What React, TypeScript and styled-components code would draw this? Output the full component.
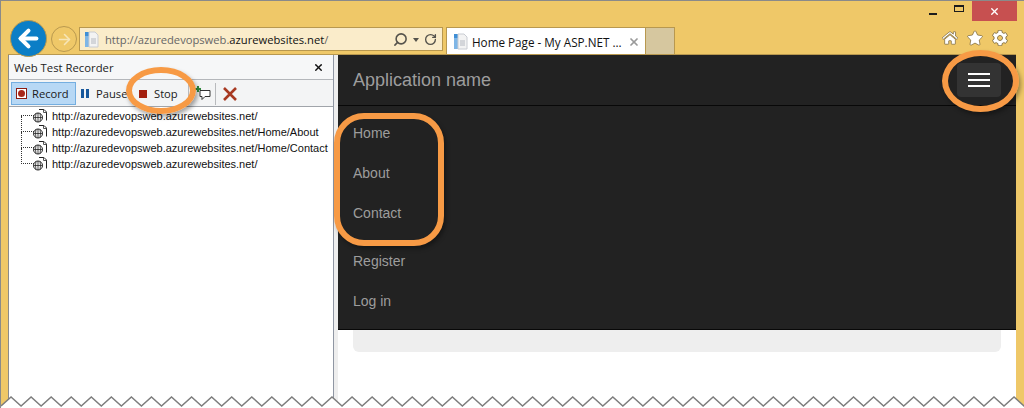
import React from 'react';
import styled, { createGlobalStyle } from 'styled-components';
import { ArrowLeft, ArrowRight, RotateCw, Search, X } from 'lucide-react';
import { FaCog, FaHome, FaStar } from 'react-icons/fa';

const GlobalStyle = createGlobalStyle`
  html, body {
    margin: 0;
    padding: 0;
    background: #fff;
    overflow: hidden;
  }
`;

const Screen = styled.div`
  position: relative;
  width: 1024px;
  height: 408px;
  overflow: hidden;
  display: flex;
  flex-direction: column;
  box-sizing: border-box;
  background: #efc868;
  border-top: 1px solid #8a8a8a;
  border-left: 1px solid #8a8a8a;
  font-family: 'Liberation Sans', Arial, sans-serif;
`;

const WindowBar = styled.div`
  display: flex;
  justify-content: flex-end;
  height: 20px;
  padding-right: 7px;
`;

const WindowButton = styled.div<{ $close?: boolean }>`
  width: ${(p) => (p.$close ? '45px' : '26px')};
  height: 20px;
  display: flex;
  align-items: center;
  justify-content: center;
  background: ${(p) => (p.$close ? '#c75050' : 'transparent')};
`;

const MinimizeGlyph = styled.span`
  width: 8px;
  height: 2px;
  margin-top: 5px;
  background: #1c1c1c;
`;

const MaximizeGlyph = styled.span`
  width: 8px;
  height: 4px;
  margin-top: -6px;
  border: 1px solid #1c1c1c;
  border-top-width: 2px;
`;

const NavRow = styled.div`
  display: flex;
  height: 33px;
  padding-left: 9px;
`;

const BackButton = styled.div`
  width: 37px;
  height: 37px;
  margin-top: -1px;
  border-radius: 50%;
  background: #0b7ec6;
  border: 1px solid #b9994f;
  box-sizing: border-box;
  display: flex;
  align-items: center;
  justify-content: center;
  color: #fff;
  flex: none;
  position: relative;
  z-index: 1;
`;

const ForwardButton = styled.div`
  width: 26px;
  height: 26px;
  margin: 5px 2px 0 4px;
  box-sizing: border-box;
  border-radius: 50%;
  border: 1px solid #b9994f;
  display: flex;
  align-items: center;
  justify-content: center;
  color: #f7e6b8;
  flex: none;
`;

const AddressBar = styled.div`
  width: 364px;
  height: 24px;
  margin-top: 6px;
  margin-right: 3px;
  padding: 0 5px 0 4px;
  box-sizing: border-box;
  display: flex;
  align-items: center;
  background: #faecca;
  border: 1px solid #b8984f;
  flex: none;
`;

const Url = styled.span`
  margin-left: 5px;
  font-family: 'Open Sans', sans-serif;
  font-size: 11.2px;
  color: #666;
  flex: 1;
`;

const Domain = styled.span`
  color: #111;
`;

const AddressTools = styled.div`
  display: flex;
  align-items: center;
  gap: 5px;
  color: #55534c;
`;

const MirroredSearch = styled(Search)`
  transform: scaleX(-1);
`;

const Caret = styled.span`
  width: 0;
  height: 0;
  border: 3.5px solid transparent;
  border-top: 4px solid #55534c;
  margin-top: 4px;
`;

const Tab = styled.div`
  width: 200px;
  height: 28px;
  margin-top: 6px;
  padding: 0 5px 0 6px;
  box-sizing: border-box;
  display: flex;
  align-items: center;
  background: #fff;
  border: 1px solid #b8984f;
  border-bottom: none;
  flex: none;
`;

const TabTitle = styled.span`
  flex: 1;
  margin-left: 3px;
  font-family: 'Open Sans', sans-serif;
  font-size: 11.7px;
  color: #111;
  white-space: nowrap;
`;

const TabFiller = styled.div`
  width: 29px;
  height: 27px;
  margin-top: 6px;
  background: #d6c79f;
  border: 1px solid #b8984f;
  border-left: none;
  border-bottom: none;
  box-sizing: border-box;
`;

const BrowserTools = styled.div`
  margin-left: auto;
  display: flex;
  align-items: center;
  gap: 9px;
  height: 34px;
  padding-right: 16px;
  color: #fff;
`;

const Main = styled.div`
  flex: 1;
  min-height: 0;
  display: flex;
  margin: 0 8px 0 7px;
  background: #fff;
  border-top: 1px solid #b8984f;
`;

const Recorder = styled.div`
  width: 324px;
  display: flex;
  flex-direction: column;
  background: #fff;
  border-left: 1px solid #8a8a8a;
  border-right: 1px solid #8f96a3;
  flex: none;
`;

const RecorderTitle = styled.div`
  height: 24px;
  padding: 0 9px 0 5px;
  display: flex;
  align-items: center;
  justify-content: space-between;
  background: #f6f7f8;
  font-family: 'Open Sans', sans-serif;
  font-size: 11.3px;
  color: #222;
  border-bottom: 1px solid #b4b7bb;
`;

const Toolbar = styled.div`
  height: 25px;
  padding: 1px 2px 0;
  display: flex;
  align-items: center;
  background: #f3f4f5;
`;

const ToolButton = styled.div<{ $active?: boolean; $width: number }>`
  width: ${(p) => p.$width}px;
  height: 23px;
  box-sizing: border-box;
  padding-left: 4px;
  display: flex;
  align-items: center;
  gap: ${(p) => (p.$active ? '5px' : '7px')};
  background: ${(p) => (p.$active ? '#b7d8f5' : 'transparent')};
  border: 1px solid ${(p) => (p.$active ? '#74aee0' : 'transparent')};
  font-family: 'Open Sans', sans-serif;
  font-size: 11.2px;
  color: #1a1a1a;
  flex: none;
  overflow: hidden;
  white-space: nowrap;
`;

const ToolDivider = styled.span<{ $left: number; $right: number }>`
  width: 1px;
  height: 22px;
  margin: 0 ${(p) => p.$right}px 0 ${(p) => p.$left}px;
  background: #b8babd;
  flex: none;
`;

const RecordGlyph = styled.span`
  width: 11px;
  height: 11px;
  box-sizing: border-box;
  border: 1px solid #8c1c12;
  background: #fff;
  display: flex;
  align-items: center;
  justify-content: center;
  &::after {
    content: '';
    width: 7px;
    height: 7px;
    border-radius: 50%;
    background: #a8261a;
  }
`;

const PauseGlyph = styled.span`
  width: 8px;
  height: 9px;
  border-left: 3px solid #17589c;
  border-right: 3px solid #17589c;
  box-sizing: border-box;
  flex: none;
`;

const StopGlyph = styled.span`
  width: 8px;
  height: 8px;
  background: #a3200f;
  flex: none;
`;

const TreePane = styled.div`
  flex: 1;
  padding-top: 1px;
  border-top: 1px solid #a0a4aa;
`;

const TreeRow = styled.div<{ $first?: boolean }>`
  position: relative;
  height: 16px;
  padding-left: 12px;
  display: flex;
  align-items: center;
  gap: 4px;
  margin-left: 12px;
  font-size: 11px;
  color: #111;
  white-space: nowrap;
  &::before {
    content: '';
    position: absolute;
    left: 0;
    top: ${(p) => (p.$first ? '7px' : '-8px')};
    width: 12px;
    height: ${(p) => (p.$first ? '0' : '15px')};
    border-left: 1px dotted #333;
    border-bottom: 1px dotted #333;
  }
`;

const IconSvg = styled.svg`
  display: block;
  flex: none;
`;

const Splitter = styled.div`
  width: 4px;
  background: #eeeeee;
  flex: none;
`;

const Page = styled.div`
  flex: 1;
  min-width: 0;
  display: flex;
  flex-direction: column;
  background: #fff;
`;

const NavHeader = styled.div`
  height: 50px;
  padding: 0 15px;
  display: flex;
  align-items: center;
  justify-content: space-between;
  background: #222;
  border-bottom: 1px solid #080808;
  font-size: 18px;
  color: #9d9d9d;
`;

const Toggle = styled.div`
  width: 44px;
  height: 34px;
  box-sizing: border-box;
  padding: 10px 11px;
  display: flex;
  flex-direction: column;
  justify-content: space-between;
  background: #333;
  border-radius: 4px;
`;

const ToggleBar = styled.span`
  height: 2px;
  background: #fff;
`;

const NavMenu = styled.div`
  padding: 7px 0 8px;
  background: #222;
  border-bottom: 1px solid #080808;
`;

const NavGroup = styled.div<{ $spaced?: boolean }>`
  margin-top: ${(p) => (p.$spaced ? '8px' : '0')};
`;

const NavItem = styled.div`
  height: 40px;
  padding-left: 15px;
  display: flex;
  align-items: center;
  font-size: 14px;
  color: #9d9d9d;
`;

const Well = styled.div`
  height: 22px;
  margin: 0 15px;
  background: #eee;
  border-radius: 0 0 6px 6px;
`;

const Callout = styled.div<{ $x: number; $y: number; $w: number; $h: number; $r: string }>`
  position: absolute;
  left: ${(p) => p.$x}px;
  top: ${(p) => p.$y}px;
  width: ${(p) => p.$w}px;
  height: ${(p) => p.$h}px;
  box-sizing: border-box;
  border: 6px solid #f79a45;
  border-radius: ${(p) => p.$r};
  box-shadow: 2px 3px 4px rgba(0, 0, 0, 0.35);
`;

const TornEdge = styled.svg`
  position: absolute;
  left: 0;
  bottom: 0;
  display: block;
`;

const PageIcon = () => (
  <IconSvg width="16" height="17" viewBox="0 0 16 17">
    <path d="M1 1h5v4H1z" fill="#3f8fd6" />
    <path d="M1 5h5v11H1z" fill="#7fb6e6" />
    <path d="M5 1h6l3 3v12H5z" fill="#f3f3f3" stroke="#c9ccd2" />
    <path d="M7 8h5M7 10h5M7 12h5" stroke="#b4b8c0" />
  </IconSvg>
);

const GlobePageIcon = () => (
  <IconSvg width="15" height="14" viewBox="0 0 15 14">
    <path d="M6 0.500h5l2.500 2.500v8.500" fill="#fff" stroke="#222" />
    <path d="M10.500 0.500v3h3" fill="none" stroke="#555" />
    <circle cx="5" cy="8.500" r="4.500" fill="#fff" stroke="#222" />
    <path d="M0.500 8.500h9M5 4v9M3 4.500q-1 4 0 8M7 4.500q1 4 0 8" fill="none" stroke="#222" strokeWidth="0.8" />
  </IconSvg>
);

const CommentIcon = () => (
  <IconSvg width="16" height="16" viewBox="0 0 16 16">
    <path d="M5 4.500h10v6H10l-3 3v-3H5z" fill="#fff" stroke="#333" />
    <path d="M3 0v6M0 3h6" stroke="#2f8a3e" strokeWidth="2" />
  </IconSvg>
);

const DeleteIcon = () => (
  <IconSvg width="14" height="14" viewBox="0 0 14 14">
    <path d="M1 1l12 12M13 1l-12 12" stroke="#a83a22" strokeWidth="2.600" />
  </IconSvg>
);

// zigzag along the bottom of the shot
const TORN_PERIOD = 20.06;

const tornPoints = () => {
  const points: string[] = ['0,12'];
  for (let i = 0; i < 52; i++) {
    const x = i * TORN_PERIOD;
    points.push(`${x + TORN_PERIOD / 2},3`, `${x + TORN_PERIOD},12`);
  }
  return points.join(' ');
};

const urls = [
  'http://azuredevopsweb.azurewebsites.net/',
  'http://azuredevopsweb.azurewebsites.net/Home/About',
  'http://azuredevopsweb.azurewebsites.net/Home/Contact',
  'http://azuredevopsweb.azurewebsites.net/',
];

const App: React.FC = () => {
  const points = tornPoints();
  return (
    <Screen>
      <GlobalStyle />
      <WindowBar>
        <WindowButton>
          <MinimizeGlyph />
        </WindowButton>
        <WindowButton>
          <MaximizeGlyph />
        </WindowButton>
        <WindowButton $close>
          <X size={11} color="#fff" strokeWidth={3} />
        </WindowButton>
      </WindowBar>
      <NavRow>
        <BackButton>
          <ArrowLeft size={27} strokeWidth={3.6} />
        </BackButton>
        <ForwardButton>
          <ArrowRight size={17} strokeWidth={2.2} />
        </ForwardButton>
        <AddressBar>
          <PageIcon />
          <Url>
            http://azuredevopsweb.<Domain>azurewebsites.net</Domain>/
          </Url>
          <AddressTools>
            <MirroredSearch size={15} strokeWidth={2.5} />
            <Caret />
            <RotateCw size={13} strokeWidth={2.5} />
          </AddressTools>
        </AddressBar>
        <Tab>
          <PageIcon />
          <TabTitle>Home Page - My ASP.NET ...</TabTitle>
          <X size={12} color="#9a9a9a" strokeWidth={3.5} />
        </Tab>
        <TabFiller />
        <BrowserTools>
          <FaHome size={16} stroke="#6d5b30" strokeWidth={24} />
          <FaStar size={16} stroke="#6d5b30" strokeWidth={24} />
          <FaCog size={16} stroke="#6d5b30" strokeWidth={24} />
        </BrowserTools>
      </NavRow>
      <Main>
        <Recorder>
          <RecorderTitle>
            Web Test Recorder
            <X size={11} color="#111" strokeWidth={3} />
          </RecorderTitle>
          <Toolbar>
            <ToolButton $active $width={65}>
              <RecordGlyph />
              Record
            </ToolButton>
            <ToolButton $width={58}>
              <PauseGlyph />
              Pause
            </ToolButton>
            <ToolButton $width={53}>
              <StopGlyph />
              Stop
            </ToolButton>
            <ToolDivider $left={1} $right={6} />
            <CommentIcon />
            <ToolDivider $left={4} $right={7} />
            <DeleteIcon />
          </Toolbar>
          <TreePane>
            {urls.map((url, index) => (
              <TreeRow key={index} $first={index === 0}>
                <GlobePageIcon />
                {url}
              </TreeRow>
            ))}
          </TreePane>
        </Recorder>
        <Splitter />
        <Page>
          <NavHeader>
            Application name
            <Toggle>
              <ToggleBar />
              <ToggleBar />
              <ToggleBar />
            </Toggle>
          </NavHeader>
          <NavMenu>
            <NavGroup>
              <NavItem>Home</NavItem>
              <NavItem>About</NavItem>
              <NavItem>Contact</NavItem>
            </NavGroup>
            <NavGroup $spaced>
              <NavItem>Register</NavItem>
              <NavItem>Log in</NavItem>
            </NavGroup>
          </NavMenu>
          <Well />
        </Page>
      </Main>
      <Callout $x={125} $y={66} $w={70} $h={47} $r="50%" />
      <Callout $x={333} $y={112} $w={110} $h={133} $r="30px" />
      <Callout $x={941} $y={49} $w={77} $h={62} $r="50%" />
      <TornEdge width="1024" height="14" viewBox="0 0 1024 14">
        <polygon points={`${points} 1024,14 0,14`} fill="#fff" />
        <polyline points={points} fill="none" stroke="#7d7d7d" strokeWidth="1.5" />
      </TornEdge>
    </Screen>
  );
};

export default App;
